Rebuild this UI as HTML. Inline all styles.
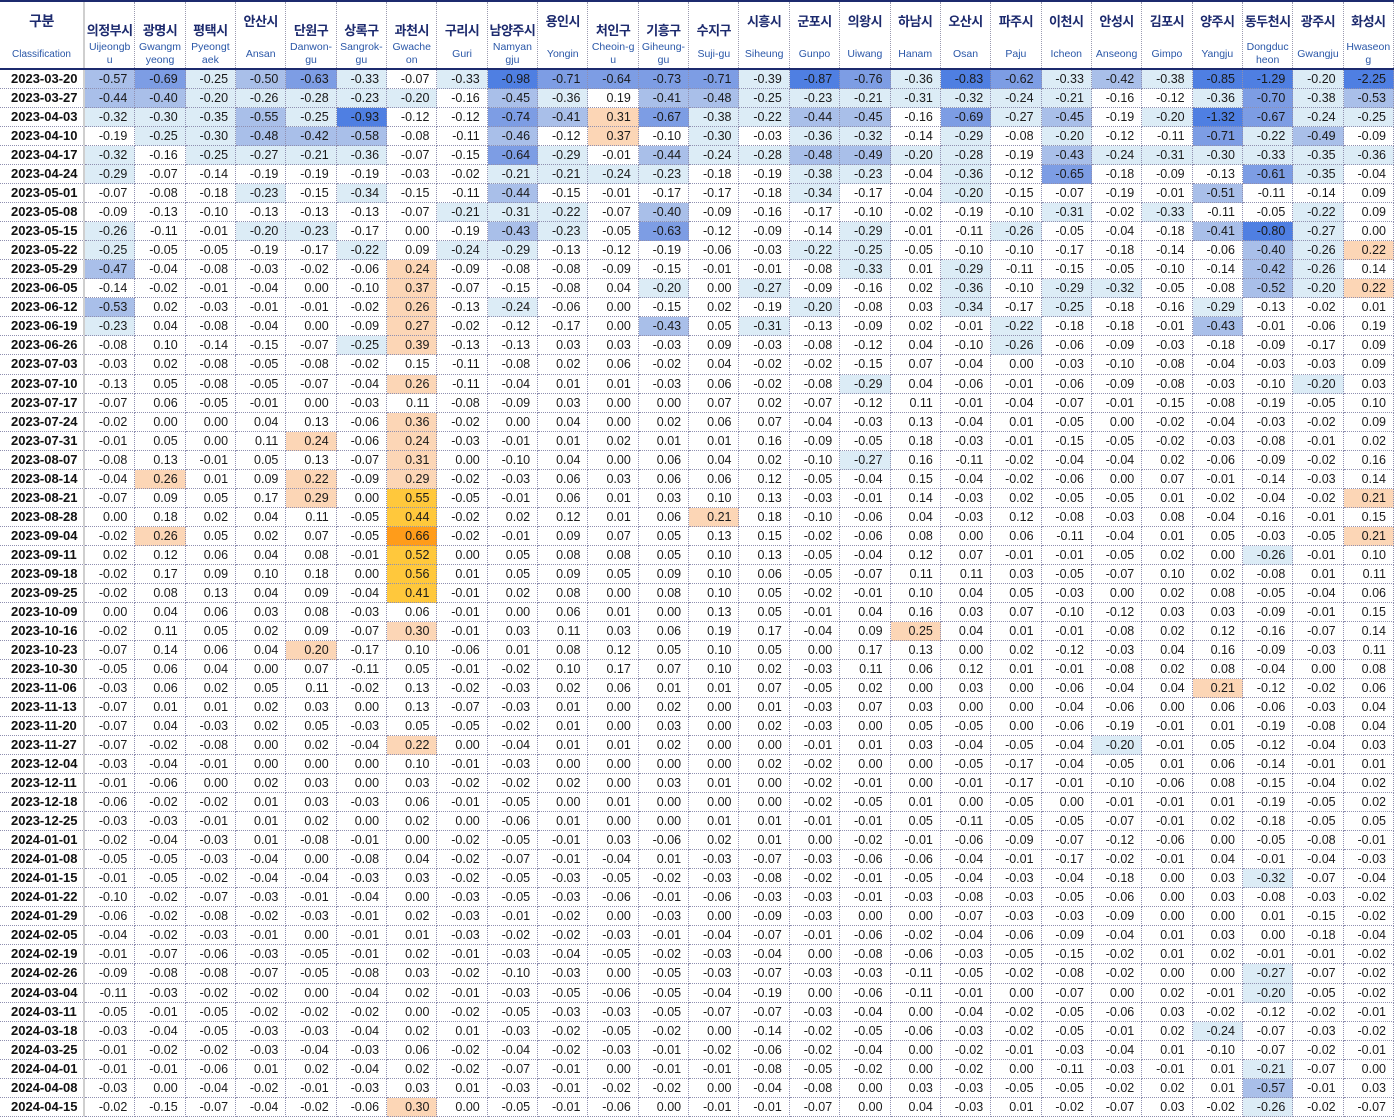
<!DOCTYPE html>
<html><head><meta charset="utf-8">
<style>
*{box-sizing:border-box;margin:0;padding:0}
body{width:1394px;height:1117px;overflow:hidden;background:#fff;font-family:"Liberation Sans","Noto Sans CJK KR",sans-serif;color:#1a1a1a}
.hd{position:relative;height:70px;border-top:2px solid #1c2a6e;border-bottom:2px solid #1c2a6e;display:grid;grid-template-columns:85px repeat(26,1fr)}
.hd>div{position:relative;border-right:1px dotted #9a9ab0;text-align:center}
.hd>div:first-child{border-right:2px solid #cfcfcf}
.k{position:absolute;left:0;right:0;top:18px;font-weight:bold;font-size:13px;color:#1c2a6e;white-space:nowrap;letter-spacing:-0.5px}
.k.u{top:9px}
.r{position:absolute;left:0;right:0;top:38px;height:28px;display:flex;align-items:center;justify-content:center;font-size:10.5px;line-height:13px;color:#2a57a8;word-break:break-all;padding:0 3px}
.hd>div:first-child .r{padding:0}
.row{display:grid;grid-template-columns:85px repeat(26,1fr);height:19.04px;font-size:12.5px;line-height:18px}
.row>div{border-right:1px dotted #8f8fb0;border-bottom:1px dotted #8f8fb0;text-align:right;padding-right:7px;white-space:nowrap}
.row>div:first-child{border-right:2px solid #cfcfcf;text-align:left;padding-left:11px;font-weight:bold;font-size:13px;color:#111}
</style></head><body>
<div class="hd">
<div><div class="k u" style="font-size:14px">구분</div><div class="r" style="font-size:10px">Classification</div></div>
<div><div class="k">의정부시</div><div class="r">Uijeongbu</div></div>
<div><div class="k">광명시</div><div class="r">Gwangmyeong</div></div>
<div><div class="k">평택시</div><div class="r">Pyeongtaek</div></div>
<div><div class="k u">안산시</div><div class="r">Ansan</div></div>
<div><div class="k">단원구</div><div class="r">Danwon-gu</div></div>
<div><div class="k">상록구</div><div class="r">Sangrok-gu</div></div>
<div><div class="k">과천시</div><div class="r">Gwacheon</div></div>
<div><div class="k">구리시</div><div class="r">Guri</div></div>
<div><div class="k">남양주시</div><div class="r">Namyangju</div></div>
<div><div class="k u">용인시</div><div class="r">Yongin</div></div>
<div><div class="k">처인구</div><div class="r">Cheoin-gu</div></div>
<div><div class="k">기흥구</div><div class="r">Giheung-gu</div></div>
<div><div class="k">수지구</div><div class="r">Suji-gu</div></div>
<div><div class="k u">시흥시</div><div class="r">Siheung</div></div>
<div><div class="k u">군포시</div><div class="r">Gunpo</div></div>
<div><div class="k u">의왕시</div><div class="r">Uiwang</div></div>
<div><div class="k u">하남시</div><div class="r">Hanam</div></div>
<div><div class="k u">오산시</div><div class="r">Osan</div></div>
<div><div class="k u">파주시</div><div class="r">Paju</div></div>
<div><div class="k u">이천시</div><div class="r">Icheon</div></div>
<div><div class="k u">안성시</div><div class="r">Anseong</div></div>
<div><div class="k u">김포시</div><div class="r">Gimpo</div></div>
<div><div class="k u">양주시</div><div class="r">Yangju</div></div>
<div><div class="k u">동두천시</div><div class="r">Dongducheon</div></div>
<div><div class="k u">광주시</div><div class="r">Gwangju</div></div>
<div><div class="k u">화성시</div><div class="r" style="padding:0">Hwaseong</div></div>
</div>
<div id="t">
<div class="row"><div>2023-03-20</div><div>-0.57</div><div>-0.69</div><div>-0.25</div><div>-0.50</div><div>-0.63</div><div>-0.33</div><div>-0.07</div><div>-0.33</div><div>-0.98</div><div>-0.71</div><div>-0.64</div><div>-0.73</div><div>-0.71</div><div>-0.39</div><div>-0.87</div><div>-0.76</div><div>-0.36</div><div>-0.83</div><div>-0.62</div><div>-0.33</div><div>-0.42</div><div>-0.38</div><div>-0.85</div><div>-1.29</div><div>-0.20</div><div>-2.25</div></div>
<div class="row"><div>2023-03-27</div><div>-0.44</div><div>-0.40</div><div>-0.20</div><div>-0.26</div><div>-0.28</div><div>-0.23</div><div>-0.20</div><div>-0.16</div><div>-0.45</div><div>-0.36</div><div>0.19</div><div>-0.41</div><div>-0.48</div><div>-0.25</div><div>-0.23</div><div>-0.21</div><div>-0.31</div><div>-0.32</div><div>-0.24</div><div>-0.21</div><div>-0.16</div><div>-0.12</div><div>-0.36</div><div>-0.70</div><div>-0.38</div><div>-0.53</div></div>
<div class="row"><div>2023-04-03</div><div>-0.32</div><div>-0.30</div><div>-0.35</div><div>-0.55</div><div>-0.25</div><div>-0.93</div><div>-0.12</div><div>-0.12</div><div>-0.74</div><div>-0.41</div><div>0.31</div><div>-0.67</div><div>-0.38</div><div>-0.22</div><div>-0.44</div><div>-0.45</div><div>-0.16</div><div>-0.69</div><div>-0.27</div><div>-0.45</div><div>-0.19</div><div>-0.20</div><div>-1.32</div><div>-0.67</div><div>-0.24</div><div>-0.25</div></div>
<div class="row"><div>2023-04-10</div><div>-0.19</div><div>-0.25</div><div>-0.30</div><div>-0.48</div><div>-0.42</div><div>-0.58</div><div>-0.08</div><div>-0.11</div><div>-0.46</div><div>-0.12</div><div>0.37</div><div>-0.10</div><div>-0.30</div><div>-0.03</div><div>-0.36</div><div>-0.32</div><div>-0.14</div><div>-0.29</div><div>-0.08</div><div>-0.20</div><div>-0.12</div><div>-0.11</div><div>-0.71</div><div>-0.22</div><div>-0.49</div><div>-0.09</div></div>
<div class="row"><div>2023-04-17</div><div>-0.32</div><div>-0.16</div><div>-0.25</div><div>-0.27</div><div>-0.21</div><div>-0.36</div><div>-0.07</div><div>-0.15</div><div>-0.64</div><div>-0.29</div><div>-0.01</div><div>-0.44</div><div>-0.24</div><div>-0.28</div><div>-0.48</div><div>-0.49</div><div>-0.20</div><div>-0.28</div><div>-0.19</div><div>-0.43</div><div>-0.24</div><div>-0.31</div><div>-0.30</div><div>-0.33</div><div>-0.35</div><div>-0.36</div></div>
<div class="row"><div>2023-04-24</div><div>-0.29</div><div>-0.07</div><div>-0.14</div><div>-0.19</div><div>-0.19</div><div>-0.19</div><div>-0.03</div><div>-0.02</div><div>-0.21</div><div>-0.21</div><div>-0.24</div><div>-0.23</div><div>-0.18</div><div>-0.19</div><div>-0.38</div><div>-0.23</div><div>-0.04</div><div>-0.36</div><div>-0.12</div><div>-0.65</div><div>-0.18</div><div>-0.09</div><div>-0.13</div><div>-0.61</div><div>-0.35</div><div>-0.04</div></div>
<div class="row"><div>2023-05-01</div><div>-0.07</div><div>-0.08</div><div>-0.18</div><div>-0.23</div><div>-0.15</div><div>-0.34</div><div>-0.15</div><div>-0.11</div><div>-0.44</div><div>-0.15</div><div>-0.01</div><div>-0.17</div><div>-0.17</div><div>-0.18</div><div>-0.34</div><div>-0.17</div><div>-0.04</div><div>-0.20</div><div>-0.15</div><div>-0.07</div><div>-0.19</div><div>-0.01</div><div>-0.51</div><div>-0.11</div><div>-0.14</div><div>0.09</div></div>
<div class="row"><div>2023-05-08</div><div>-0.09</div><div>-0.13</div><div>-0.10</div><div>-0.13</div><div>-0.13</div><div>-0.13</div><div>-0.07</div><div>-0.21</div><div>-0.31</div><div>-0.22</div><div>-0.07</div><div>-0.40</div><div>-0.09</div><div>-0.16</div><div>-0.17</div><div>-0.10</div><div>-0.02</div><div>-0.19</div><div>-0.10</div><div>-0.31</div><div>-0.02</div><div>-0.33</div><div>-0.11</div><div>-0.05</div><div>-0.22</div><div>0.09</div></div>
<div class="row"><div>2023-05-15</div><div>-0.26</div><div>-0.11</div><div>-0.01</div><div>-0.20</div><div>-0.23</div><div>-0.17</div><div>0.00</div><div>-0.19</div><div>-0.43</div><div>-0.23</div><div>-0.05</div><div>-0.63</div><div>-0.12</div><div>-0.09</div><div>-0.14</div><div>-0.29</div><div>-0.01</div><div>-0.11</div><div>-0.26</div><div>-0.05</div><div>-0.04</div><div>-0.18</div><div>-0.41</div><div>-0.80</div><div>-0.27</div><div>0.00</div></div>
<div class="row"><div>2023-05-22</div><div>-0.25</div><div>-0.05</div><div>-0.05</div><div>-0.19</div><div>-0.17</div><div>-0.22</div><div>0.09</div><div>-0.24</div><div>-0.29</div><div>-0.13</div><div>-0.12</div><div>-0.19</div><div>-0.06</div><div>-0.03</div><div>-0.22</div><div>-0.25</div><div>-0.05</div><div>-0.10</div><div>-0.10</div><div>-0.17</div><div>-0.18</div><div>-0.14</div><div>-0.06</div><div>-0.40</div><div>-0.26</div><div>0.22</div></div>
<div class="row"><div>2023-05-29</div><div>-0.47</div><div>-0.04</div><div>-0.08</div><div>-0.03</div><div>-0.02</div><div>-0.06</div><div>0.24</div><div>-0.09</div><div>-0.08</div><div>-0.08</div><div>-0.09</div><div>-0.15</div><div>-0.01</div><div>-0.01</div><div>-0.08</div><div>-0.33</div><div>0.01</div><div>-0.29</div><div>-0.11</div><div>-0.15</div><div>-0.05</div><div>-0.10</div><div>-0.14</div><div>-0.42</div><div>-0.26</div><div>0.14</div></div>
<div class="row"><div>2023-06-05</div><div>-0.14</div><div>-0.02</div><div>-0.01</div><div>-0.04</div><div>0.00</div><div>-0.10</div><div>0.37</div><div>-0.07</div><div>-0.15</div><div>-0.08</div><div>0.04</div><div>-0.20</div><div>0.00</div><div>-0.27</div><div>-0.09</div><div>-0.16</div><div>0.02</div><div>-0.36</div><div>-0.10</div><div>-0.29</div><div>-0.32</div><div>-0.05</div><div>-0.08</div><div>-0.52</div><div>-0.20</div><div>0.22</div></div>
<div class="row"><div>2023-06-12</div><div>-0.53</div><div>0.02</div><div>-0.03</div><div>-0.01</div><div>-0.01</div><div>-0.02</div><div>0.26</div><div>-0.13</div><div>-0.24</div><div>-0.06</div><div>0.00</div><div>-0.15</div><div>0.02</div><div>-0.19</div><div>-0.20</div><div>-0.08</div><div>0.03</div><div>-0.34</div><div>-0.17</div><div>-0.25</div><div>-0.18</div><div>-0.16</div><div>-0.29</div><div>-0.13</div><div>-0.02</div><div>0.01</div></div>
<div class="row"><div>2023-06-19</div><div>-0.23</div><div>0.04</div><div>-0.08</div><div>-0.04</div><div>0.00</div><div>-0.09</div><div>0.27</div><div>-0.02</div><div>-0.12</div><div>-0.17</div><div>0.00</div><div>-0.43</div><div>0.05</div><div>-0.31</div><div>-0.13</div><div>-0.09</div><div>0.02</div><div>-0.01</div><div>-0.22</div><div>-0.18</div><div>-0.18</div><div>-0.01</div><div>-0.43</div><div>-0.01</div><div>-0.06</div><div>0.19</div></div>
<div class="row"><div>2023-06-26</div><div>-0.08</div><div>0.10</div><div>-0.14</div><div>-0.15</div><div>-0.07</div><div>-0.25</div><div>0.39</div><div>-0.13</div><div>-0.13</div><div>0.03</div><div>0.03</div><div>-0.03</div><div>0.09</div><div>-0.03</div><div>-0.08</div><div>-0.12</div><div>0.04</div><div>-0.10</div><div>-0.26</div><div>-0.06</div><div>-0.09</div><div>-0.03</div><div>-0.18</div><div>-0.09</div><div>-0.17</div><div>0.09</div></div>
<div class="row"><div>2023-07-03</div><div>-0.03</div><div>0.02</div><div>-0.08</div><div>-0.05</div><div>-0.08</div><div>-0.02</div><div>0.15</div><div>-0.11</div><div>-0.08</div><div>0.02</div><div>0.06</div><div>-0.02</div><div>0.04</div><div>-0.02</div><div>-0.02</div><div>-0.15</div><div>0.07</div><div>-0.04</div><div>0.00</div><div>-0.03</div><div>-0.10</div><div>-0.08</div><div>-0.04</div><div>-0.03</div><div>-0.03</div><div>0.09</div></div>
<div class="row"><div>2023-07-10</div><div>-0.13</div><div>0.05</div><div>-0.08</div><div>-0.05</div><div>-0.07</div><div>-0.04</div><div>0.26</div><div>-0.11</div><div>-0.04</div><div>0.01</div><div>0.01</div><div>-0.03</div><div>0.06</div><div>-0.02</div><div>-0.08</div><div>-0.29</div><div>0.04</div><div>-0.06</div><div>-0.01</div><div>-0.06</div><div>-0.09</div><div>-0.08</div><div>-0.03</div><div>-0.10</div><div>-0.20</div><div>0.03</div></div>
<div class="row"><div>2023-07-17</div><div>-0.07</div><div>0.06</div><div>-0.05</div><div>-0.01</div><div>0.00</div><div>-0.03</div><div>0.11</div><div>-0.08</div><div>-0.09</div><div>0.03</div><div>0.00</div><div>0.00</div><div>0.07</div><div>0.02</div><div>-0.07</div><div>-0.12</div><div>0.11</div><div>-0.01</div><div>-0.04</div><div>-0.07</div><div>-0.01</div><div>-0.15</div><div>-0.08</div><div>-0.19</div><div>-0.05</div><div>0.10</div></div>
<div class="row"><div>2023-07-24</div><div>-0.02</div><div>0.00</div><div>0.00</div><div>0.04</div><div>0.13</div><div>-0.06</div><div>0.36</div><div>-0.02</div><div>0.00</div><div>0.04</div><div>0.00</div><div>0.02</div><div>0.06</div><div>0.07</div><div>-0.04</div><div>-0.03</div><div>0.13</div><div>-0.04</div><div>0.01</div><div>-0.05</div><div>0.00</div><div>-0.02</div><div>-0.04</div><div>-0.03</div><div>-0.02</div><div>0.09</div></div>
<div class="row"><div>2023-07-31</div><div>-0.01</div><div>0.05</div><div>0.00</div><div>0.11</div><div>0.24</div><div>-0.06</div><div>0.24</div><div>-0.03</div><div>-0.01</div><div>0.01</div><div>0.02</div><div>0.01</div><div>0.01</div><div>0.16</div><div>-0.09</div><div>-0.05</div><div>0.18</div><div>-0.03</div><div>-0.01</div><div>-0.15</div><div>-0.05</div><div>-0.02</div><div>-0.03</div><div>-0.08</div><div>-0.01</div><div>0.02</div></div>
<div class="row"><div>2023-08-07</div><div>-0.08</div><div>0.13</div><div>-0.01</div><div>0.05</div><div>0.13</div><div>-0.07</div><div>0.31</div><div>0.00</div><div>-0.10</div><div>0.04</div><div>0.00</div><div>0.06</div><div>0.04</div><div>0.02</div><div>-0.10</div><div>-0.27</div><div>0.16</div><div>-0.11</div><div>-0.02</div><div>-0.04</div><div>-0.04</div><div>0.02</div><div>-0.06</div><div>-0.09</div><div>-0.02</div><div>0.16</div></div>
<div class="row"><div>2023-08-14</div><div>-0.04</div><div>0.26</div><div>0.01</div><div>0.09</div><div>0.22</div><div>-0.09</div><div>0.29</div><div>-0.02</div><div>-0.03</div><div>0.06</div><div>0.03</div><div>0.06</div><div>0.06</div><div>0.12</div><div>-0.05</div><div>-0.04</div><div>0.15</div><div>-0.04</div><div>-0.02</div><div>-0.06</div><div>0.00</div><div>0.07</div><div>-0.01</div><div>-0.14</div><div>-0.03</div><div>0.14</div></div>
<div class="row"><div>2023-08-21</div><div>-0.07</div><div>0.09</div><div>0.05</div><div>0.17</div><div>0.29</div><div>0.00</div><div>0.55</div><div>-0.05</div><div>-0.01</div><div>0.06</div><div>0.01</div><div>0.03</div><div>0.10</div><div>0.13</div><div>-0.03</div><div>-0.01</div><div>0.14</div><div>-0.03</div><div>0.02</div><div>-0.05</div><div>-0.05</div><div>0.01</div><div>-0.02</div><div>-0.04</div><div>-0.02</div><div>0.21</div></div>
<div class="row"><div>2023-08-28</div><div>0.00</div><div>0.18</div><div>0.02</div><div>0.04</div><div>0.11</div><div>-0.05</div><div>0.44</div><div>-0.02</div><div>0.02</div><div>0.12</div><div>0.01</div><div>0.06</div><div>0.21</div><div>0.18</div><div>-0.10</div><div>-0.06</div><div>0.04</div><div>-0.03</div><div>0.12</div><div>-0.08</div><div>-0.03</div><div>0.08</div><div>-0.04</div><div>-0.16</div><div>-0.01</div><div>0.15</div></div>
<div class="row"><div>2023-09-04</div><div>-0.02</div><div>0.26</div><div>0.05</div><div>0.02</div><div>0.07</div><div>-0.05</div><div>0.66</div><div>-0.02</div><div>-0.01</div><div>0.09</div><div>0.07</div><div>0.05</div><div>0.13</div><div>0.15</div><div>-0.02</div><div>-0.06</div><div>0.08</div><div>0.00</div><div>0.06</div><div>-0.11</div><div>-0.04</div><div>0.01</div><div>0.05</div><div>-0.03</div><div>-0.05</div><div>0.21</div></div>
<div class="row"><div>2023-09-11</div><div>0.02</div><div>0.12</div><div>0.06</div><div>0.04</div><div>0.08</div><div>-0.01</div><div>0.52</div><div>0.00</div><div>0.05</div><div>0.08</div><div>0.08</div><div>0.05</div><div>0.10</div><div>0.13</div><div>-0.05</div><div>-0.04</div><div>0.12</div><div>0.07</div><div>-0.01</div><div>-0.01</div><div>-0.05</div><div>0.02</div><div>0.00</div><div>-0.26</div><div>-0.01</div><div>0.10</div></div>
<div class="row"><div>2023-09-18</div><div>-0.02</div><div>0.17</div><div>0.09</div><div>0.10</div><div>0.18</div><div>0.00</div><div>0.56</div><div>0.01</div><div>0.05</div><div>0.09</div><div>0.05</div><div>0.09</div><div>0.10</div><div>0.06</div><div>-0.05</div><div>-0.07</div><div>0.11</div><div>0.11</div><div>0.03</div><div>-0.05</div><div>-0.07</div><div>0.10</div><div>0.02</div><div>-0.08</div><div>0.01</div><div>0.11</div></div>
<div class="row"><div>2023-09-25</div><div>-0.02</div><div>0.08</div><div>0.13</div><div>0.04</div><div>0.09</div><div>-0.04</div><div>0.41</div><div>-0.01</div><div>0.02</div><div>0.08</div><div>0.00</div><div>0.08</div><div>0.10</div><div>0.05</div><div>-0.02</div><div>-0.01</div><div>0.10</div><div>0.04</div><div>0.05</div><div>-0.03</div><div>0.00</div><div>0.02</div><div>0.08</div><div>-0.05</div><div>-0.04</div><div>0.06</div></div>
<div class="row"><div>2023-10-09</div><div>0.00</div><div>0.04</div><div>0.06</div><div>0.03</div><div>0.08</div><div>-0.03</div><div>0.06</div><div>-0.01</div><div>0.00</div><div>0.06</div><div>0.01</div><div>0.00</div><div>0.13</div><div>0.05</div><div>-0.01</div><div>0.04</div><div>0.16</div><div>0.03</div><div>0.07</div><div>-0.10</div><div>-0.12</div><div>0.03</div><div>0.03</div><div>-0.09</div><div>-0.01</div><div>0.15</div></div>
<div class="row"><div>2023-10-16</div><div>-0.02</div><div>0.11</div><div>0.05</div><div>0.02</div><div>0.09</div><div>-0.07</div><div>0.30</div><div>-0.01</div><div>0.03</div><div>0.11</div><div>0.03</div><div>0.06</div><div>0.19</div><div>0.17</div><div>-0.04</div><div>0.09</div><div>0.25</div><div>0.04</div><div>0.01</div><div>-0.01</div><div>-0.08</div><div>0.02</div><div>0.12</div><div>-0.16</div><div>-0.07</div><div>0.14</div></div>
<div class="row"><div>2023-10-23</div><div>-0.07</div><div>0.14</div><div>0.06</div><div>0.04</div><div>0.20</div><div>-0.17</div><div>0.10</div><div>-0.06</div><div>0.01</div><div>0.08</div><div>0.12</div><div>0.05</div><div>0.10</div><div>0.05</div><div>0.00</div><div>0.17</div><div>0.13</div><div>0.00</div><div>0.02</div><div>-0.12</div><div>-0.03</div><div>0.04</div><div>0.16</div><div>-0.09</div><div>-0.03</div><div>0.11</div></div>
<div class="row"><div>2023-10-30</div><div>-0.05</div><div>0.06</div><div>0.04</div><div>0.00</div><div>0.07</div><div>-0.11</div><div>0.05</div><div>-0.01</div><div>-0.02</div><div>0.10</div><div>0.17</div><div>0.07</div><div>0.10</div><div>0.02</div><div>-0.03</div><div>0.11</div><div>0.06</div><div>0.12</div><div>0.01</div><div>-0.01</div><div>-0.08</div><div>0.02</div><div>0.08</div><div>-0.04</div><div>0.00</div><div>0.08</div></div>
<div class="row"><div>2023-11-06</div><div>-0.03</div><div>0.06</div><div>0.02</div><div>0.05</div><div>0.11</div><div>-0.02</div><div>0.13</div><div>-0.02</div><div>-0.03</div><div>0.02</div><div>0.06</div><div>0.01</div><div>0.01</div><div>0.07</div><div>-0.05</div><div>0.02</div><div>0.00</div><div>0.03</div><div>0.00</div><div>-0.06</div><div>-0.04</div><div>0.04</div><div>0.21</div><div>-0.12</div><div>-0.02</div><div>0.06</div></div>
<div class="row"><div>2023-11-13</div><div>-0.07</div><div>0.01</div><div>0.01</div><div>0.02</div><div>0.03</div><div>0.00</div><div>0.13</div><div>-0.07</div><div>-0.03</div><div>0.01</div><div>0.00</div><div>0.02</div><div>0.00</div><div>0.01</div><div>-0.03</div><div>0.07</div><div>0.03</div><div>0.00</div><div>0.00</div><div>-0.04</div><div>-0.06</div><div>0.00</div><div>0.06</div><div>-0.06</div><div>-0.03</div><div>0.04</div></div>
<div class="row"><div>2023-11-20</div><div>-0.07</div><div>0.04</div><div>-0.03</div><div>0.02</div><div>0.05</div><div>-0.03</div><div>0.05</div><div>-0.05</div><div>-0.02</div><div>0.01</div><div>0.00</div><div>0.03</div><div>0.00</div><div>0.02</div><div>-0.03</div><div>0.00</div><div>0.05</div><div>-0.05</div><div>0.00</div><div>-0.06</div><div>-0.19</div><div>-0.01</div><div>0.01</div><div>-0.19</div><div>-0.08</div><div>0.04</div></div>
<div class="row"><div>2023-11-27</div><div>-0.07</div><div>-0.02</div><div>-0.08</div><div>0.00</div><div>0.02</div><div>-0.04</div><div>0.22</div><div>0.00</div><div>-0.04</div><div>0.01</div><div>0.01</div><div>0.02</div><div>0.00</div><div>0.00</div><div>-0.01</div><div>0.01</div><div>0.03</div><div>-0.04</div><div>-0.05</div><div>-0.04</div><div>-0.20</div><div>-0.01</div><div>0.05</div><div>-0.12</div><div>-0.04</div><div>0.03</div></div>
<div class="row"><div>2023-12-04</div><div>-0.03</div><div>-0.04</div><div>-0.01</div><div>0.00</div><div>0.00</div><div>0.00</div><div>0.10</div><div>-0.01</div><div>-0.03</div><div>0.00</div><div>0.00</div><div>0.00</div><div>0.00</div><div>0.02</div><div>-0.02</div><div>0.00</div><div>0.00</div><div>-0.05</div><div>-0.17</div><div>-0.04</div><div>-0.05</div><div>0.01</div><div>0.06</div><div>-0.14</div><div>-0.01</div><div>0.01</div></div>
<div class="row"><div>2023-12-11</div><div>-0.01</div><div>-0.06</div><div>0.00</div><div>0.02</div><div>0.03</div><div>0.00</div><div>0.03</div><div>-0.02</div><div>-0.02</div><div>0.02</div><div>0.00</div><div>0.03</div><div>0.01</div><div>0.00</div><div>-0.02</div><div>-0.01</div><div>0.00</div><div>-0.01</div><div>-0.17</div><div>-0.01</div><div>-0.10</div><div>-0.06</div><div>0.08</div><div>-0.15</div><div>-0.04</div><div>0.02</div></div>
<div class="row"><div>2023-12-18</div><div>-0.06</div><div>-0.02</div><div>-0.02</div><div>0.01</div><div>0.03</div><div>-0.03</div><div>0.06</div><div>-0.01</div><div>-0.05</div><div>0.00</div><div>0.01</div><div>0.00</div><div>0.00</div><div>0.00</div><div>-0.02</div><div>-0.05</div><div>0.01</div><div>0.00</div><div>-0.05</div><div>0.00</div><div>-0.01</div><div>-0.01</div><div>0.01</div><div>-0.19</div><div>-0.05</div><div>0.02</div></div>
<div class="row"><div>2023-12-25</div><div>-0.03</div><div>-0.03</div><div>-0.01</div><div>0.01</div><div>0.02</div><div>0.00</div><div>0.02</div><div>0.00</div><div>-0.06</div><div>0.01</div><div>0.00</div><div>0.00</div><div>0.01</div><div>0.01</div><div>-0.01</div><div>-0.01</div><div>0.05</div><div>-0.11</div><div>-0.05</div><div>-0.05</div><div>-0.07</div><div>-0.01</div><div>0.02</div><div>-0.18</div><div>-0.05</div><div>0.05</div></div>
<div class="row"><div>2024-01-01</div><div>-0.02</div><div>-0.04</div><div>-0.03</div><div>0.01</div><div>-0.08</div><div>-0.01</div><div>0.00</div><div>-0.02</div><div>-0.05</div><div>-0.01</div><div>0.03</div><div>-0.06</div><div>0.02</div><div>0.01</div><div>0.00</div><div>-0.02</div><div>-0.01</div><div>-0.06</div><div>-0.09</div><div>-0.07</div><div>-0.12</div><div>-0.06</div><div>0.00</div><div>-0.05</div><div>-0.08</div><div>-0.01</div></div>
<div class="row"><div>2024-01-08</div><div>-0.05</div><div>-0.05</div><div>-0.03</div><div>-0.04</div><div>0.00</div><div>-0.08</div><div>0.04</div><div>-0.02</div><div>-0.07</div><div>-0.01</div><div>-0.04</div><div>0.01</div><div>-0.03</div><div>-0.07</div><div>-0.03</div><div>-0.06</div><div>-0.06</div><div>-0.04</div><div>-0.01</div><div>-0.17</div><div>-0.02</div><div>-0.01</div><div>0.04</div><div>-0.01</div><div>-0.04</div><div>-0.03</div></div>
<div class="row"><div>2024-01-15</div><div>-0.01</div><div>-0.05</div><div>-0.02</div><div>-0.04</div><div>-0.04</div><div>-0.03</div><div>0.03</div><div>-0.02</div><div>-0.05</div><div>-0.03</div><div>-0.05</div><div>-0.02</div><div>-0.03</div><div>-0.08</div><div>-0.02</div><div>-0.01</div><div>-0.05</div><div>-0.04</div><div>-0.03</div><div>-0.04</div><div>-0.18</div><div>0.00</div><div>0.03</div><div>-0.32</div><div>-0.07</div><div>-0.04</div></div>
<div class="row"><div>2024-01-22</div><div>-0.10</div><div>-0.02</div><div>-0.07</div><div>-0.03</div><div>-0.01</div><div>-0.04</div><div>0.00</div><div>-0.03</div><div>-0.05</div><div>-0.03</div><div>-0.06</div><div>-0.01</div><div>-0.06</div><div>-0.03</div><div>-0.03</div><div>-0.01</div><div>-0.03</div><div>-0.08</div><div>-0.03</div><div>-0.05</div><div>-0.06</div><div>0.00</div><div>0.03</div><div>-0.08</div><div>-0.03</div><div>-0.02</div></div>
<div class="row"><div>2024-01-29</div><div>-0.06</div><div>-0.02</div><div>-0.08</div><div>-0.02</div><div>-0.03</div><div>-0.01</div><div>0.02</div><div>-0.03</div><div>-0.01</div><div>-0.02</div><div>0.00</div><div>-0.03</div><div>0.00</div><div>-0.09</div><div>-0.03</div><div>0.00</div><div>0.00</div><div>-0.07</div><div>-0.03</div><div>-0.03</div><div>-0.09</div><div>0.00</div><div>0.00</div><div>0.01</div><div>-0.15</div><div>-0.02</div></div>
<div class="row"><div>2024-02-05</div><div>-0.04</div><div>-0.02</div><div>-0.03</div><div>-0.01</div><div>0.00</div><div>-0.01</div><div>0.01</div><div>-0.03</div><div>-0.02</div><div>-0.02</div><div>-0.03</div><div>-0.01</div><div>-0.04</div><div>-0.07</div><div>-0.01</div><div>-0.06</div><div>-0.02</div><div>-0.04</div><div>-0.06</div><div>-0.09</div><div>-0.04</div><div>0.01</div><div>0.03</div><div>0.00</div><div>-0.18</div><div>-0.04</div></div>
<div class="row"><div>2024-02-19</div><div>-0.01</div><div>-0.07</div><div>-0.06</div><div>-0.03</div><div>-0.05</div><div>-0.01</div><div>0.02</div><div>-0.01</div><div>-0.03</div><div>-0.04</div><div>-0.05</div><div>-0.02</div><div>-0.03</div><div>-0.04</div><div>0.00</div><div>-0.08</div><div>-0.06</div><div>-0.03</div><div>-0.05</div><div>-0.15</div><div>-0.02</div><div>0.01</div><div>0.02</div><div>-0.01</div><div>-0.01</div><div>-0.02</div></div>
<div class="row"><div>2024-02-26</div><div>-0.09</div><div>-0.08</div><div>-0.08</div><div>-0.07</div><div>-0.05</div><div>-0.08</div><div>0.03</div><div>-0.02</div><div>-0.10</div><div>-0.03</div><div>0.00</div><div>-0.05</div><div>-0.03</div><div>-0.07</div><div>-0.03</div><div>-0.03</div><div>-0.11</div><div>-0.05</div><div>-0.02</div><div>-0.08</div><div>-0.02</div><div>0.00</div><div>0.00</div><div>-0.27</div><div>-0.07</div><div>-0.02</div></div>
<div class="row"><div>2024-03-04</div><div>-0.11</div><div>-0.03</div><div>-0.02</div><div>-0.02</div><div>0.00</div><div>-0.04</div><div>0.02</div><div>-0.01</div><div>-0.03</div><div>-0.05</div><div>-0.06</div><div>-0.05</div><div>-0.04</div><div>-0.19</div><div>0.00</div><div>-0.06</div><div>-0.11</div><div>-0.01</div><div>0.00</div><div>-0.07</div><div>0.00</div><div>0.02</div><div>-0.01</div><div>-0.20</div><div>-0.05</div><div>-0.02</div></div>
<div class="row"><div>2024-03-11</div><div>-0.05</div><div>-0.01</div><div>-0.05</div><div>-0.02</div><div>-0.02</div><div>-0.02</div><div>0.00</div><div>-0.02</div><div>-0.05</div><div>-0.03</div><div>-0.03</div><div>-0.05</div><div>-0.07</div><div>-0.07</div><div>-0.03</div><div>-0.04</div><div>0.00</div><div>-0.04</div><div>-0.02</div><div>-0.05</div><div>-0.06</div><div>0.03</div><div>-0.02</div><div>-0.12</div><div>-0.02</div><div>-0.01</div></div>
<div class="row"><div>2024-03-18</div><div>-0.03</div><div>-0.04</div><div>-0.05</div><div>-0.03</div><div>-0.03</div><div>-0.04</div><div>0.02</div><div>0.01</div><div>-0.03</div><div>-0.02</div><div>-0.05</div><div>-0.02</div><div>0.00</div><div>-0.14</div><div>-0.02</div><div>-0.05</div><div>-0.06</div><div>-0.03</div><div>-0.02</div><div>-0.05</div><div>-0.01</div><div>0.02</div><div>-0.24</div><div>-0.07</div><div>-0.03</div><div>-0.02</div></div>
<div class="row"><div>2024-03-25</div><div>-0.01</div><div>-0.02</div><div>-0.02</div><div>-0.03</div><div>-0.04</div><div>-0.03</div><div>0.06</div><div>-0.02</div><div>-0.04</div><div>-0.02</div><div>-0.03</div><div>-0.01</div><div>-0.02</div><div>-0.06</div><div>-0.02</div><div>-0.04</div><div>0.00</div><div>-0.02</div><div>-0.01</div><div>-0.03</div><div>-0.04</div><div>0.01</div><div>-0.10</div><div>-0.07</div><div>-0.02</div><div>-0.01</div></div>
<div class="row"><div>2024-04-01</div><div>-0.01</div><div>-0.01</div><div>-0.06</div><div>0.01</div><div>0.02</div><div>-0.04</div><div>0.02</div><div>-0.02</div><div>-0.07</div><div>-0.01</div><div>0.00</div><div>-0.01</div><div>-0.01</div><div>-0.08</div><div>-0.05</div><div>-0.02</div><div>0.00</div><div>-0.02</div><div>0.00</div><div>-0.11</div><div>-0.03</div><div>-0.01</div><div>0.01</div><div>-0.21</div><div>-0.07</div><div>0.00</div></div>
<div class="row"><div>2024-04-08</div><div>-0.03</div><div>0.00</div><div>-0.04</div><div>-0.02</div><div>-0.01</div><div>-0.03</div><div>0.03</div><div>0.01</div><div>-0.03</div><div>-0.01</div><div>-0.02</div><div>-0.02</div><div>0.00</div><div>-0.04</div><div>-0.08</div><div>0.00</div><div>0.03</div><div>-0.03</div><div>-0.05</div><div>-0.05</div><div>-0.02</div><div>0.02</div><div>0.01</div><div>-0.57</div><div>-0.01</div><div>0.03</div></div>
<div class="row"><div>2024-04-15</div><div>-0.02</div><div>-0.15</div><div>-0.07</div><div>-0.04</div><div>-0.02</div><div>-0.06</div><div>0.30</div><div>0.00</div><div>-0.05</div><div>-0.01</div><div>-0.06</div><div>0.00</div><div>-0.01</div><div>-0.01</div><div>-0.07</div><div>0.00</div><div>0.04</div><div>-0.03</div><div>0.01</div><div>-0.02</div><div>-0.07</div><div>0.03</div><div>-0.02</div><div>-0.26</div><div>-0.02</div><div>-0.07</div></div>
</div>
<script>
document.querySelectorAll('.row').forEach(function(r){
  var c=r.children;
  for(var i=1;i<c.length;i++){
    var v=parseFloat(c[i].textContent),bg='';
    if(v<=-0.8)bg='#4f7fe2';
    else if(v<=-0.6)bg='#7d9de4';
    else if(v<=-0.4)bg='#a9bfe9';
    else if(v<=-0.2)bg='#dcecf6';
    else if(v>=0.6)bg='#ff9c1a';
    else if(v>=0.4)bg='#ffc83c';
    else if(v>=0.2)bg='#fcd6b6';
    if(bg)c[i].style.background=bg;
  }
});
</script>
</body></html>
